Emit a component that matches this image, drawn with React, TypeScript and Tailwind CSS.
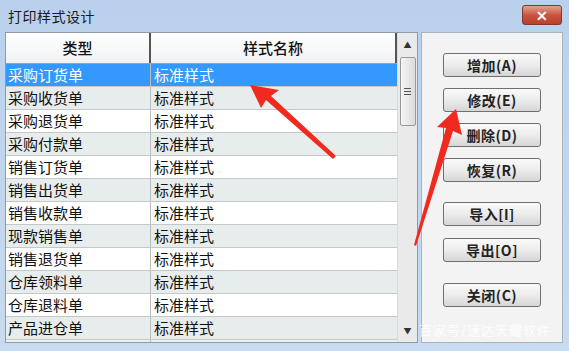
import React from "react";

const rows = [
  "采购订货单",
  "采购收货单",
  "采购退货单",
  "采购付款单",
  "销售订货单",
  "销售出货单",
  "销售收款单",
  "现款销售单",
  "销售退货单",
  "仓库领料单",
  "仓库退料单",
  "产品进仓单",
];

const buttons = [
  { label: "增加(A)", mt: "mt-[20px]" },
  { label: "修改(E)", mt: "mt-[11px]" },
  { label: "删除(D)", mt: "mt-[11px]" },
  { label: "恢复(R)", mt: "mt-[11px]" },
  { label: "导入[I]", mt: "mt-[20px]" },
  { label: "导出[O]", mt: "mt-[12px]" },
  { label: "关闭(C)", mt: "mt-[21px]" },
];

export default function App() {
  return (
    <div
      className="relative w-[569px] h-[351px] overflow-hidden flex flex-col bg-gradient-to-b from-[#b9d1ec] to-[#c8dbef] text-[#111]"
      style={{ fontFamily: '"Noto Sans CJK SC", "Noto Sans", sans-serif' }}
    >
      {/* 标题栏 */}
      <div className="h-[32px] flex items-center pl-[8px] pr-[7px] shrink-0">
        <span className="text-[14px] text-[#1a1a1a] tracking-[0.5px]">打印样式设计</span>
        <div className="ml-auto w-[40px] h-[20px] mb-[3px] rounded-[3px] border border-[#7a3a30] bg-gradient-to-b from-[#e3a394] via-[#c9543f] to-[#b8402c] flex items-center justify-center">
          <span className="text-white text-[14px] font-black leading-none">✕</span>
        </div>
      </div>

      {/* 主体 */}
      <div className="flex pl-[5px] pr-[6px] h-[313px] gap-[3px]">
        {/* 列表 */}
        <div className="w-[413px] h-[311px] flex border border-[#8f9aa6] bg-white">
          <div className="w-[392px] flex flex-col">
            <div className="h-[31px] flex shrink-0 bg-gradient-to-b from-white to-[#f1f2f4] border-b border-[#a0a0a0] text-[15px] font-medium">
              <div className="w-[145px] flex items-center justify-center border-r-2 border-[#555]">类型</div>
              <div className="flex-1 flex items-center justify-center border-r-2 border-[#555]">样式名称</div>
            </div>
            {rows.map((name, i) => (
              <div
                key={name}
                className={`h-[23px] flex shrink-0 text-[15px] leading-[22px] border-b border-[#c4c8c8] ${
                  i === 0 ? "bg-[#3399ff] text-white" : i % 2 === 1 ? "bg-[#e7eded]" : "bg-white"
                }`}
              >
                <div className="w-[145px] pl-[2px] border-r border-[#b8bcbc]">{name}</div>
                <div className="flex-1 pl-[3px]">标准样式</div>
              </div>
            ))}
            <div className="flex-1 flex bg-[#eef1f1]">
              <div className="w-[145px] border-r border-[#b8bcbc]" />
            </div>
          </div>
          {/* 滚动条 */}
          <div className="w-[20px] bg-[#eaeaea] border-l border-[#dcdcdc] flex flex-col items-center">
            <div className="h-[24px] flex items-center justify-center text-[8px] text-[#333]">▲</div>
            <div className="w-[16px] h-[69px] rounded-[2px] border border-[#9a9a9a] bg-gradient-to-r from-[#f4f4f4] to-[#dcdcdc] flex flex-col items-center justify-center gap-[2px]">
              <div className="w-[7px] h-[1px] bg-[#555]" />
              <div className="w-[7px] h-[1px] bg-[#555]" />
              <div className="w-[7px] h-[1px] bg-[#555]" />
            </div>
            <div className="flex-1" />
            <div className="h-[22px] flex items-center justify-center text-[8px] text-[#333]">▼</div>
          </div>
        </div>

        {/* 按钮面板 */}
        <div className="flex-1 h-[311px] border border-[#a9b3bd] bg-[#f3f3f3] flex flex-col items-center">
          {buttons.map((b) => (
            <button
              key={b.label}
              className={`${b.mt} w-[98px] h-[24px] shrink-0 rounded-[3px] border border-[#6f6f6f] bg-gradient-to-b from-[#fafafa] via-[#ececec] to-[#d6d6d6] text-[14px] font-bold text-[#222] flex items-center justify-center tracking-[0.5px]`}
            >
              {b.label}
            </button>
          ))}
        </div>
      </div>

      {/* 红色箭头 */}
      <svg className="absolute left-0 top-0 pointer-events-none" width="569" height="351">
        <polygon points="250,85 279,90 271,96 336,156 333,159 266,100 261,108" fill="#f02a1e" />
        <polygon points="456,109 462,135 453,131 416,246 414,245 446,128 437,127" fill="#f02a1e" />
      </svg>

      {/* 水印 */}
      <div className="absolute left-[419px] top-[320px] text-[13px] text-white/80 tracking-[1px]">百家号/速达天耀软件</div>
    </div>
  );
}
